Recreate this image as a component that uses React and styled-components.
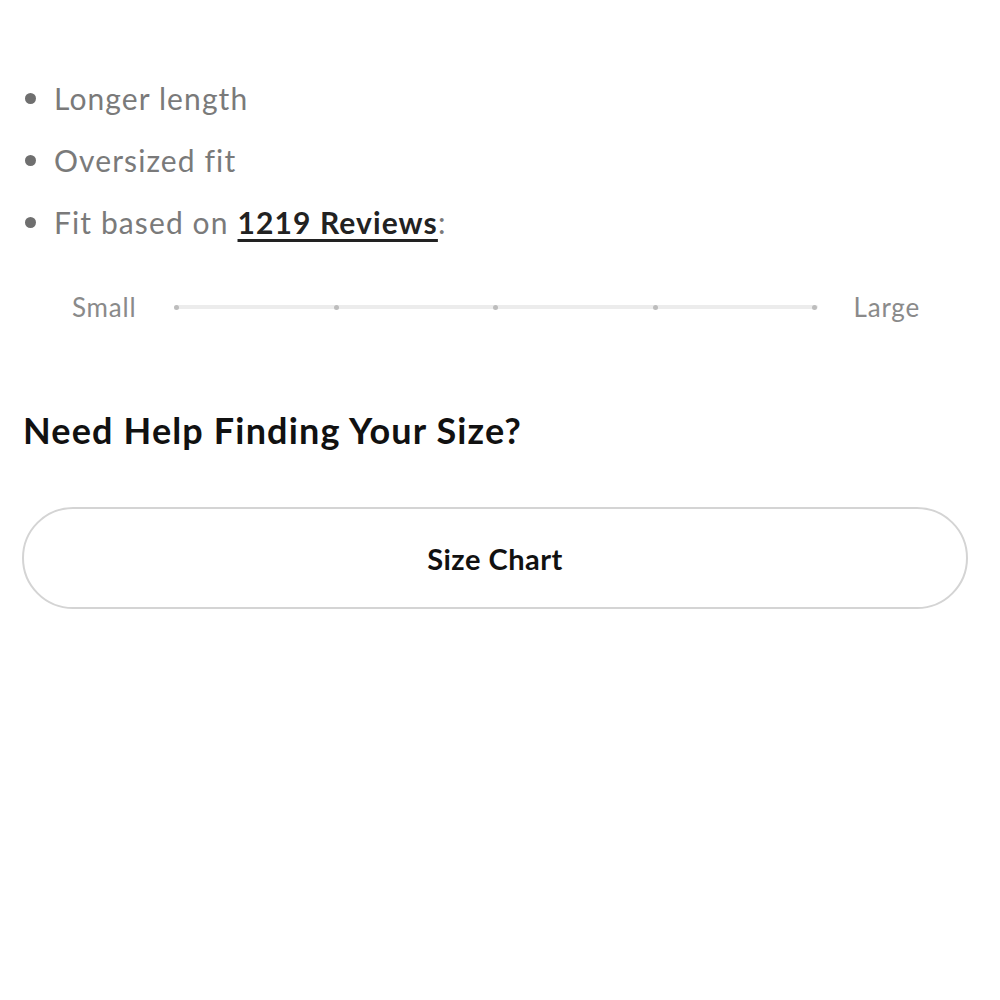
import React from 'react';
import styled, { createGlobalStyle } from 'styled-components';

const GlobalStyle = createGlobalStyle`
  html, body {
    margin: 0;
    padding: 0;
    background: #ffffff;
  }
  body {
    font-family: 'Lato', 'Noto Sans', sans-serif;
    -webkit-font-smoothing: antialiased;
  }
`;

const Page = styled.div`
  width: 1000px;
  padding: 78px 32px 0 22px;
  box-sizing: border-box;
`;

const FeatureList = styled.ul`
  list-style: none;
  margin: 0;
  padding: 0;
  display: flex;
  flex-direction: column;
  gap: 22px;
`;

const FeatureItem = styled.li`
  display: flex;
  align-items: center;
  gap: 18px;
  height: 40px;
  font-size: 30px;
  color: #7a7a7a;
  letter-spacing: 1.1px;

  &::before {
    content: '';
    width: 11px;
    height: 11px;
    border-radius: 50%;
    background: #6f6f6f;
    margin-left: 3px;
    flex-shrink: 0;
  }
`;

const ReviewLink = styled.a`
  color: #222;
  font-weight: 700;
  text-decoration: underline;
  text-decoration-thickness: 3px;
  text-underline-offset: 5px;
  margin-left: 9px;
`;

const FitScale = styled.div`
  display: flex;
  align-items: center;
  margin: 49px 0 0 50px;
  width: 848px;
`;

const ScaleLabel = styled.span`
  font-size: 26px;
  color: #8a8a8a;
  letter-spacing: 0.8px;
  flex-shrink: 0;
`;

const Track = styled.div`
  flex: 1;
  height: 4px;
  background: #ececec;
  border-radius: 2px;
  margin: 0 36px 0 38px;
  display: flex;
  justify-content: space-between;
  align-items: center;
`;

const Tick = styled.span`
  width: 5px;
  height: 5px;
  border-radius: 50%;
  background: #bdbdbd;
`;

const Heading = styled.h2`
  margin: 85px 0 0 1px;
  font-size: 36px;
  font-weight: 700;
  color: #111;
  letter-spacing: 1.15px;
`;

const SizeChartButton = styled.button`
  display: flex;
  align-items: center;
  justify-content: center;
  width: 946px;
  height: 102px;
  margin-top: 55px;
  border: 2px solid #d4d4d4;
  border-radius: 51px;
  background: #fff;
  font-family: inherit;
  font-size: 29px;
  font-weight: 700;
  letter-spacing: 0.5px;
  color: #111;
  cursor: pointer;
`;

export default function App() {
  return (
    <>
      <GlobalStyle />
      <Page>
        <FeatureList>
          <FeatureItem>Longer length</FeatureItem>
          <FeatureItem>Oversized fit</FeatureItem>
          <FeatureItem>
            <span>
              Fit based on<ReviewLink href="#">1219 Reviews</ReviewLink>:
            </span>
          </FeatureItem>
        </FeatureList>
        <FitScale>
          <ScaleLabel>Small</ScaleLabel>
          <Track>
            {[0, 1, 2, 3, 4].map((i) => (
              <Tick key={i} />
            ))}
          </Track>
          <ScaleLabel>Large</ScaleLabel>
        </FitScale>
        <Heading>Need Help Finding Your Size?</Heading>
        <SizeChartButton>Size Chart</SizeChartButton>
      </Page>
    </>
  );
}
